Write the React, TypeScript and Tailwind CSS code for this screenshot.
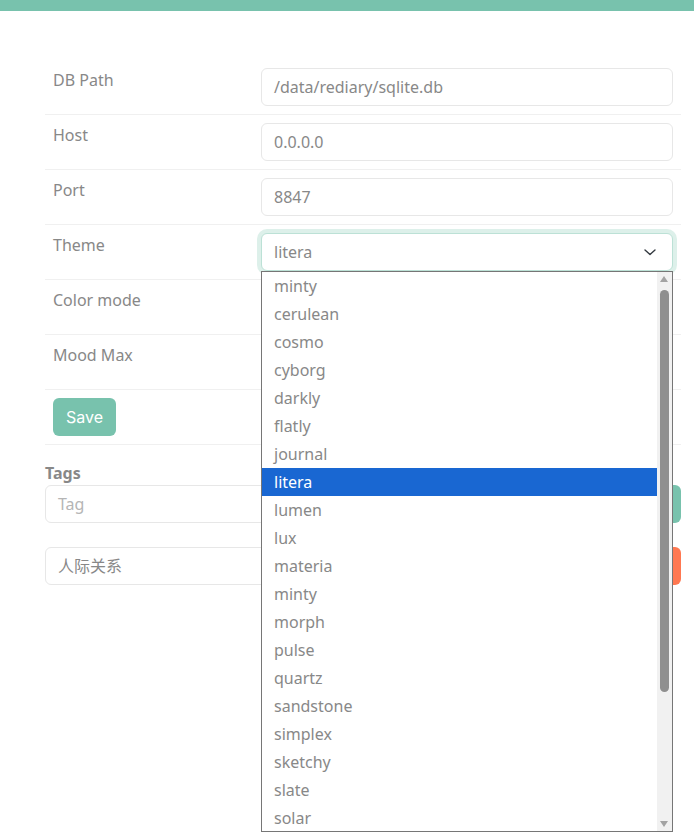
import React from "react";

const themes = [
  "minty",
  "cerulean",
  "cosmo",
  "cyborg",
  "darkly",
  "flatly",
  "journal",
  "litera",
  "lumen",
  "lux",
  "materia",
  "minty",
  "morph",
  "pulse",
  "quartz",
  "sandstone",
  "simplex",
  "sketchy",
  "slate",
  "solar",
];

function Chevron() {
  return (
    <svg width="12" height="7" viewBox="0 0 12 7" fill="none">
      <path d="M1 1l5 4.5 5-4.5" stroke="#343a40" strokeWidth="1.4" strokeLinecap="round" strokeLinejoin="round" />
    </svg>
  );
}

function Row({ label, children }: { label: string; children: React.ReactNode }) {
  return (
    <div className="flex border-b border-[#f0f0f0]">
      <div className="w-[208px] shrink-0 p-2 leading-6">{label}</div>
      <div className="relative flex-1 p-2">{children}</div>
    </div>
  );
}

function TextInput({ value }: { value?: string }) {
  return (
    <div className="flex h-[38px] items-center rounded-[6px] border border-[#e7e7e7] bg-white px-3 text-[#888]">
      {value}
    </div>
  );
}

// open native-looking select list
function ThemeList() {
  return (
    <div className="absolute left-2 top-[46px] z-10 flex h-[561px] w-[412px] border border-[#767676] bg-white">
      <ul className="flex-1">
        {themes.map((t, i) => (
          <li
            key={i}
            className={
              "h-7 pl-3 leading-7 " + (t === "litera" ? "bg-[#1967d2] text-white" : "text-[#888]")
            }
          >
            {t}
          </li>
        ))}
      </ul>
      {/* scrollbar */}
      <div className="relative w-[15px] bg-[#f1f1f1]">
        <div className="absolute left-[3px] top-[4px] h-0 w-0 border-x-[4.5px] border-b-[6px] border-x-transparent border-b-[#a3a3a3]" />
        <div className="absolute left-[3px] top-[18px] h-[402px] w-[9px] rounded-full bg-[#8f8f8f]" />
        <div className="absolute bottom-[4px] left-[3px] h-0 w-0 border-x-[4.5px] border-t-[6px] border-x-transparent border-t-[#a3a3a3]" />
      </div>
    </div>
  );
}

export default function App() {
  return (
    <div className="min-h-[839px] bg-white text-[16px] text-[#888]" style={{ fontFamily: '"Noto Sans", "Noto Sans CJK SC", sans-serif' }}>
      <div className="h-[11px] bg-[#78c2ad]" />

      <div className="pl-[45px] pr-[13px] pt-[49px]">
        <Row label="DB Path">
          <TextInput value="/data/rediary/sqlite.db" />
        </Row>
        <Row label="Host">
          <TextInput value="0.0.0.0" />
        </Row>
        <Row label="Port">
          <TextInput value="8847" />
        </Row>
        <Row label="Theme">
          <div className="flex h-[38px] items-center justify-between rounded-[6px] border border-[#bce1d6] bg-white pl-3 pr-[16px] text-[#888] shadow-[0_0_0_4px_rgba(120,194,173,0.25)]">
            <span>litera</span>
            <Chevron />
          </div>
          <ThemeList />
        </Row>
        {/* these two are covered by the open list */}
        <Row label="Color mode">
          <TextInput />
        </Row>
        <Row label="Mood Max">
          <TextInput />
        </Row>
        <div className="border-b border-[#f0f0f0] p-2">
          <button className="h-[38px] rounded-[6px] bg-[#78c2ad] px-[13px] text-white" style={{ fontFamily: "Inter, sans-serif" }}>
            Save
          </button>
        </div>

        <div className="mt-4 font-bold leading-6">Tags</div>
        <div className="flex h-[38px]">
          <div className="flex flex-1 items-center rounded-l-[6px] border border-[#e7e7e7] px-3 text-[#b5b5b5]">Tag</div>
          <button className="w-[60px] rounded-r-[6px] bg-[#78c2ad] text-white">+</button>
        </div>
        <div className="mt-6 flex h-[38px]">
          <div className="flex flex-1 items-center rounded-l-[6px] border border-[#e7e7e7] px-3 text-[#888]">人际关系</div>
          <button className="w-[60px] rounded-r-[6px] bg-[#ff7851] text-white">×</button>
        </div>
      </div>
    </div>
  );
}
